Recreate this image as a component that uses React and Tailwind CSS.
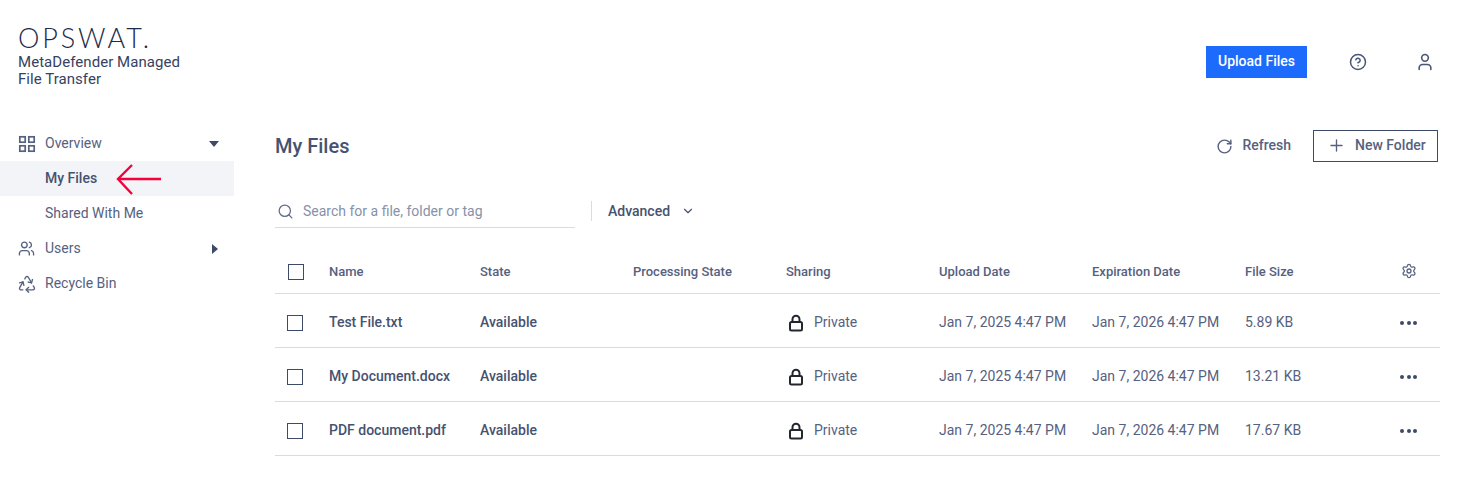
import React from "react";
import {
  ChevronDown,
  CircleHelp,
  Plus,
  Recycle,
  RotateCw,
  Search,
  Settings,
  User,
  Users,
} from "lucide-react";

const rowGrid =
  "grid grid-cols-[54px_151px_153px_153px_153px_153px_153px_148px_1fr] items-center";

const files = [
  { name: "Test File.txt", size: "5.89 KB" },
  { name: "My Document.docx", size: "13.21 KB" },
  { name: "PDF document.pdf", size: "17.67 KB" },
];

function Checkbox({ className }) {
  return <span className={`block h-4 w-4 border border-[#3d4a68] ${className}`} />;
}

function GridIcon() {
  return (
    <svg width="18" height="18" viewBox="0 0 18 18" fill="none" stroke="#566180" strokeWidth="1.7">
      <rect x="1.8" y="1.8" width="5.4" height="5.4" />
      <rect x="10.8" y="1.8" width="5.4" height="5.4" />
      <rect x="1.8" y="10.8" width="5.4" height="5.4" />
      <rect x="10.8" y="10.8" width="5.4" height="5.4" />
    </svg>
  );
}

function LockIcon() {
  return (
    <svg width="16" height="18" viewBox="0 0 16 18" fill="none" stroke="#24262e" strokeWidth="2" className="mr-[10px] ml-[2px]">
      <rect x="2" y="8" width="12" height="8.5" rx="1.5" />
      <path d="M4.5 8V5.2a3.5 3.5 0 0 1 7 0V8" />
    </svg>
  );
}

function NavItem({ icon, label, caret, active }) {
  return (
    <div className={`relative flex h-[35px] items-center pl-[18px] pr-[15px] ${active ? "bg-[#f3f4f8] font-medium" : ""}`}>
      <span className="flex w-[27px] shrink-0 items-center">{icon}</span>
      <span className="flex-1">{label}</span>
      {caret === "down" && <span className="h-0 w-0 border-x-[5.5px] border-t-[6px] border-x-transparent border-t-[#3d4a68]" />}
      {caret === "right" && <span className="mr-[1px] h-0 w-0 border-y-[5.5px] border-l-[6px] border-y-transparent border-l-[#3d4a68]" />}
    </div>
  );
}

function Sidebar() {
  return (
    <aside className="w-[234px] shrink-0 pt-[15px] text-[14px] text-[#566180]">
      <NavItem icon={<GridIcon />} label="Overview" caret="down" />
      <div className="relative text-[#465270]">
        <NavItem active label="My Files" />
        {/* red annotation arrow */}
        <svg className="absolute left-[115px] top-[1px]" width="50" height="34" viewBox="0 0 50 34" fill="none" stroke="#f5003d" strokeWidth="2.4">
          <path d="M3 17H46" />
          <path d="M17 3L3 17L17 32" />
        </svg>
      </div>
      <NavItem label="Shared With Me" />
      <NavItem icon={<Users size={17} strokeWidth={1.9} />} label="Users" caret="right" />
      <NavItem icon={<Recycle size={20} strokeWidth={1.6} className="-ml-[1px]" />} label="Recycle Bin" />
    </aside>
  );
}

function FileRow({ file }) {
  return (
    <div className={`${rowGrid} h-[54px] border-b border-[#d9dbe3] pt-[4px] text-[14px] text-[#566180]`}>
      <Checkbox className="ml-3" />
      <span className="font-medium text-[#465270]">{file.name}</span>
      <span className="font-medium text-[#465270]">Available</span>
      <span />
      <span className="flex items-center">
        <LockIcon />
        Private
      </span>
      <span>Jan 7, 2025 4:47 PM</span>
      <span>Jan 7, 2026 4:47 PM</span>
      <span>{file.size}</span>
      <span className="flex justify-end gap-[2.5px] pr-[23px] pt-[1px]">
        <i className="h-1 w-1 rounded-full bg-[#3d4a68]" />
        <i className="h-1 w-1 rounded-full bg-[#3d4a68]" />
        <i className="h-1 w-1 rounded-full bg-[#3d4a68]" />
      </span>
    </div>
  );
}

export default function App() {
  return (
    <div className="h-[479px] w-[1476px] overflow-hidden bg-white font-['Roboto',sans-serif]">
      <header className="flex h-[111px] items-start justify-between pl-[18px] pr-[40px]">
        <div className="w-[190px] pt-[22px] text-[15px] leading-[17px] tracking-[0.05px] text-[#36425f]">
          <div className="font-['Lato',sans-serif] text-[27px] font-light leading-[31px] tracking-[2.9px] text-[#1d2b4a]">OPSWAT.</div>
          <div className="mt-[1px]">MetaDefender Managed</div>
          <div>File Transfer</div>
        </div>
        <div className="mt-[46px] flex items-center text-[#4a5675]">
          <button type="button" className="flex h-8 w-[101px] items-center justify-center bg-[#1d6bfc] pb-[1px] text-[14px] font-medium text-white">
            Upload Files
          </button>
          <CircleHelp size={18} strokeWidth={2} className="ml-[42px]" />
          <User size={20} strokeWidth={1.9} className="ml-[48px] mr-[1px]" />
        </div>
      </header>

      <div className="flex">
        <Sidebar />
        <main className="ml-[41px] w-[1165px]">
          <div className="flex h-[70px] items-center justify-between pr-[2px]">
            <h1 className="text-[20px] font-medium text-[#465270]">My Files</h1>
            <div className="flex items-center text-[14px] font-medium text-[#566180]">
              <RotateCw size={17} strokeWidth={2} className="mr-[9px]" />
              <span className="pb-[2px]">Refresh</span>
              <button type="button" className="ml-[22px] flex h-8 w-[125px] items-center border border-[#3d4a68] pb-[1px] pl-[13px]">
                <Plus size={19} strokeWidth={1.7} className="mr-[9px]" />
                New Folder
              </button>
            </div>
          </div>

          <div className="mt-[14px] flex h-[33px] items-start">
            <div className="flex h-[33px] w-[300px] items-center border-b border-[#d9dbe3] text-[14px] text-[#8791a8]">
              <Search size={17} strokeWidth={1.8} className="ml-[2px] mr-[9px] text-[#5f6b88]" />
              Search for a file, folder or tag
            </div>
            <div className="ml-4 mt-[6px] flex h-5 items-center border-l border-[#d9dbe3] pl-4 text-[14px] font-medium text-[#465270]">
              Advanced
              <ChevronDown size={14} strokeWidth={2} className="ml-[11px]" />
            </div>
          </div>

          <div className={`${rowGrid} mt-[22px] h-[44px] border-b border-[#d9dbe3] text-[13px] font-medium text-[#566180]`}>
            <Checkbox className="ml-[13px]" />
            <span>Name</span>
            <span>State</span>
            <span>Processing State</span>
            <span>Sharing</span>
            <span>Upload Date</span>
            <span>Expiration Date</span>
            <span>File Size</span>
            <span className="flex justify-end pb-[2px] pr-[23px]">
              <Settings size={16} strokeWidth={1.9} />
            </span>
          </div>
          {files.map((file) => (
            <FileRow key={file.name} file={file} />
          ))}
        </main>
      </div>
    </div>
  );
}
